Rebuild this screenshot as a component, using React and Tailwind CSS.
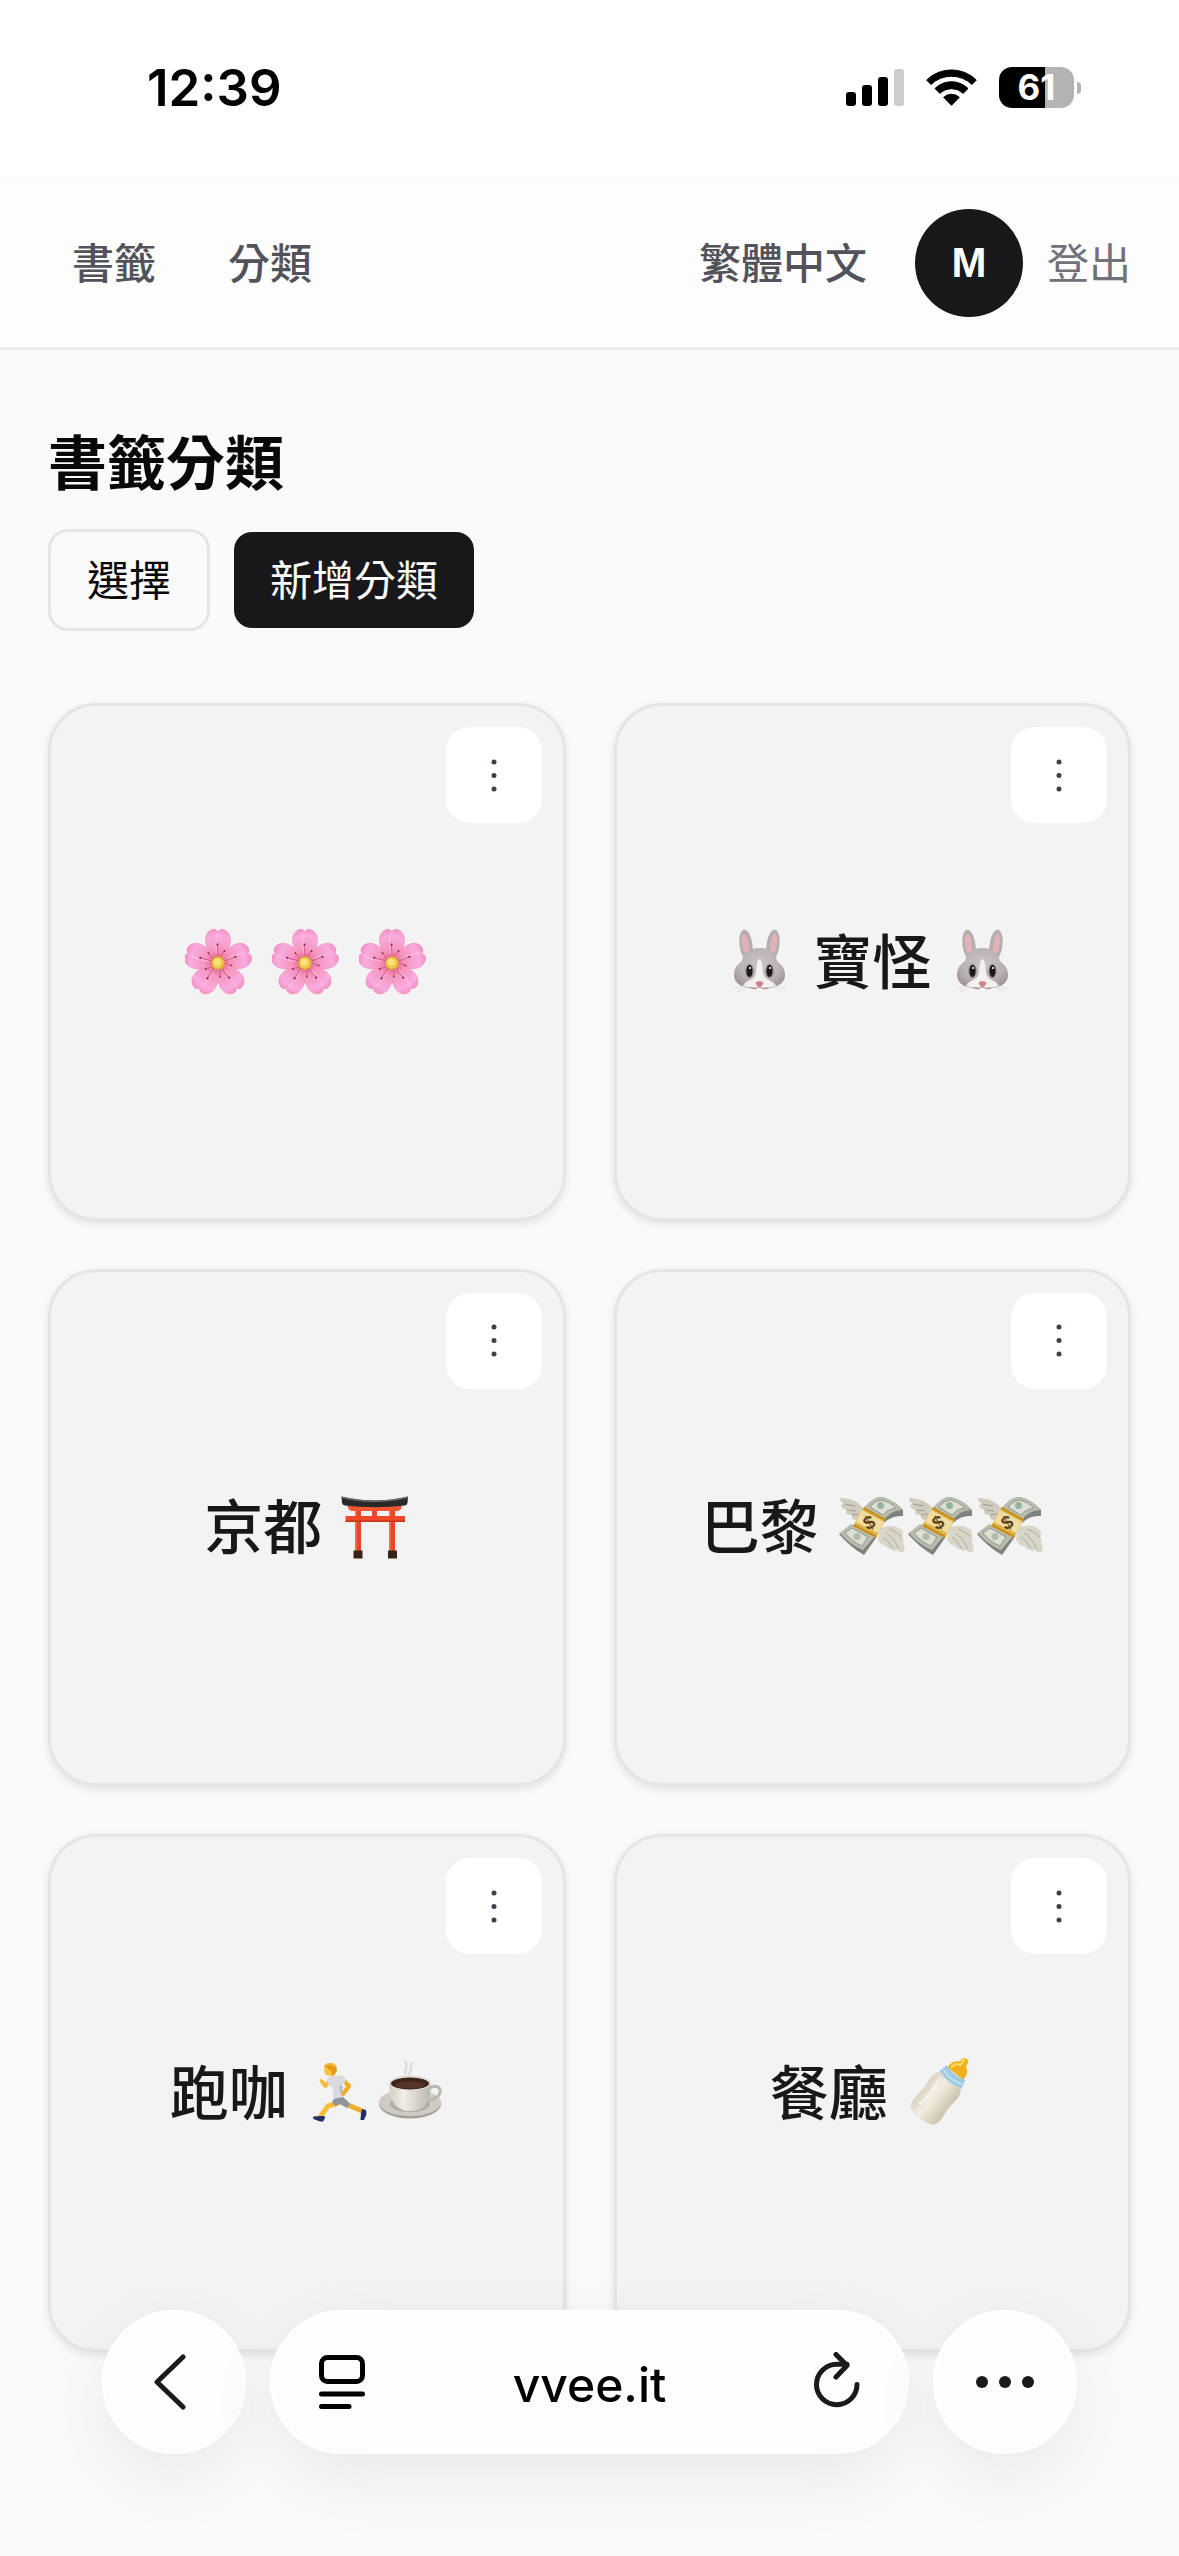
import React, { useState } from 'react';

const categories = [
  { id: 1, parts: ['blossom', 'blossom', 'blossom'] },
  { id: 2, parts: ['rabbit', '寶怪', 'rabbit'] },
  { id: 3, parts: ['京都', 'shrine'] },
  { id: 4, parts: ['巴黎', 'money*3'] },
  { id: 5, parts: ['跑咖', 'runner+coffee'] },
  { id: 6, parts: ['餐廳', 'bottle'] },
];

function Emoji({ label, children }) {
  return (
    <svg role="img" aria-label={label} viewBox="0 0 69 69" className="w-[69px] h-[69px] shrink-0">
      {children}
    </svg>
  );
}

function Blossom() {
  return (
    <Emoji label="櫻花">
      <defs>
        <radialGradient id="petal" gradientUnits="userSpaceOnUse" cx="0" cy="0" r="34">
          <stop offset="0.1" stopColor="#e8638f" />
          <stop offset="0.4" stopColor="#f696bd" />
          <stop offset="0.8" stopColor="#f9abe0" />
          <stop offset="1" stopColor="#f291c4" />
        </radialGradient>
      </defs>
      <g transform="translate(33 36)">
        {[72, 144, 216, 288, 0].map((deg) => (
          <g key={deg} transform={`rotate(${deg})`}>
            <path
              d="M0 0C-7-6-13-16-12.500-24C-12-31-6.500-34.500-2.500-33.500C-1.300-33-.500-32 0-31C.500-32 1.300-33 2.500-33.500C6.500-34.500 12-31 12.500-24C13-16 7-6 0 0Z"
              fill="url(#petal)"
              stroke="#ee86b4"
              strokeWidth="0.5"
            />
            <path d="M-1-30C-3-22-2-14-1-9" stroke="#fdc3ea" strokeWidth="1.200" fill="none" opacity="0.7" />
            <path d="M0-6L-.5-18M2-6L6.500-12" stroke="#b9406f" strokeWidth="0.6" />
            <circle cx="-.5" cy="-18.500" r="1.100" fill="#7c2a4c" />
            <circle cx="6.500" cy="-12" r="1" fill="#7c2a4c" />
          </g>
        ))}
        <circle r="7" fill="#dda23a" />
        <circle r="6" fill="#f2c94f" strokeDasharray="1 1.500" stroke="#c98b2d" />
        <circle cx="-1" cy="-1" r="3.500" fill="#fae27a" />
      </g>
    </Emoji>
  );
}

function Rabbit() {
  return (
    <Emoji label="兔子">
      <defs>
        <radialGradient id="fur" cx="0.5" cy="0.4" r="0.6">
          <stop offset="0" stopColor="#cdc6c7" />
          <stop offset="0.7" stopColor="#b8b0b1" />
          <stop offset="1" stopColor="#a0979a" />
        </radialGradient>
      </defs>
      <g transform="translate(3 0)">
        <path d="M14 30C9 20 9 6 14.500 2.500C20 2 24 12 24 27Z" fill="#b5adae" />
        <path d="M47 30C52 20 52 6 46.500 2.500C41 2 37 12 37 27Z" fill="#b5adae" />
        <path d="M15.500 26C12 18 12 9 15 6.500C19 8 20.500 17 20 25Z" fill="#dfb3b7" />
        <path d="M45.500 26C49 18 49 9 46 6.500C42 8 40.500 17 41 25Z" fill="#dfb3b7" />
        <path d="M30.500 21C20 21 14 27 13 34C9 37 5 41 5 48C5 57 14 62 30.500 62C47 62 56 57 56 48C56 41 52 37 48 34C47 27 41 21 30.500 21Z" fill="url(#fur)" />
        <path d="M30.500 32C27 33 28 44 26 49C22 54 16 54 14 59C19 61.500 42 61.500 47 59C45 54 39 54 35 49C33 44 34 33 30.500 32Z" fill="#f3f0ef" />
        <ellipse cx="20.500" cy="44" rx="4.200" ry="7.200" fill="#8e8586" />
        <ellipse cx="40.500" cy="44" rx="4.200" ry="7.200" fill="#8e8586" />
        <ellipse cx="20.500" cy="44" rx="3" ry="6" fill="#19191b" />
        <ellipse cx="40.500" cy="44" rx="3" ry="6" fill="#19191b" />
        <circle cx="21" cy="41" r="1.100" fill="#fff" />
        <circle cx="41" cy="41" r="1.100" fill="#fff" />
        <path d="M26.500 55.500Q30.500 53 34.500 55.500Q33 60 30.500 60Q28 60 26.500 55.500Z" fill="#cf8088" />
        <path d="M22 61Q27 63 30.500 60Q34 63 39 61" stroke="#b87f85" fill="none" />
        <rect x="27.500" y="61" width="6" height="3.500" rx="1.500" fill="#fff" stroke="#d8d3d2" strokeWidth="0.4" />
        <path d="M17 58L5 62M18 60L8 65M44 58L56 62M43 60L53 65" stroke="#d5d0d0" strokeWidth="0.6" />
      </g>
    </Emoji>
  );
}

function Shrine() {
  return (
    <Emoji label="鳥居">
      <path d="M15 17H21V59H15ZM49 17H55V59H49Z" fill="#ea4526" />
      <path d="M15 17H17V59H15ZM49 17H51V59H49Z" fill="#f9694a" />
      <path d="M32 16H37V24H32Z" fill="#ea4526" />
      <path d="M5.500 23H65V29H5.500Z" fill="#ee4a29" />
      <path d="M5.500 27.500H65V29H5.500Z" fill="#c93418" />
      <path d="M7 10.500Q35 15 62.500 10.500L61 16Q60 18 57 18H13Q10 18 8.500 16Z" fill="#f25532" />
      <path d="M1.500 3.500Q35 11.500 68 3.500L67.500 10Q67 12 65 12.500Q35 16 5 12.500Q2.500 12 2 10Z" fill="#292927" />
      <path d="M1.500 3.500Q35 11.500 68 3.500L67.800 5Q35 13 1.700 5Z" fill="#6c6d69" />
      <path d="M13.500 57.500H22.500V65.500H13.500ZM48 57.500H57V65.500H48Z" fill="#37231c" />
    </Emoji>
  );
}

function Money() {
  return (
    <Emoji label="長翅膀的錢">
      <path d="M26 15C22 9 13 5 3 5C3 8 5 10 7 11C5 11 4 12 4 13C6 16 8 17 10 17C9 18 9 19 9 20C11 22 13 22 15 22C14 24 15 25 16 26C19 28 23 27 25 24Z" fill="#cfccbe" />
      <path d="M7 11L18 13M10 17L19 18M15 22L22 21" stroke="#98968b" strokeWidth="0.9" />
      <path d="M2 41L12 33L39 45L27 62Q13 54 2 41Z" fill="#7f837d" />
      <path d="M3 40L14 31L38 43L26 57Q13 52 3 40Z" fill="#b9bdb0" />
      <path d="M8 40L15 35L31 44L25 53Q15 49 8 40Z" fill="#dcdfd2" stroke="#8b9285" strokeWidth="0.9" />
      <circle cx="20" cy="43.500" r="3.500" fill="#aebda9" />
      <path d="M27 15Q37 3 45 4Q57 7 66 17V23Q55 22 47 30L28 21Z" fill="#7f837d" />
      <path d="M27 15Q37 3 45 4Q57 7 65 17Q54 17 47 27Z" fill="#b9bdb0" />
      <path d="M33 14Q39 7 45 7Q53 9 59 15Q51 16 46 22Z" fill="#dcdfd2" stroke="#8b9285" strokeWidth="0.9" />
      <circle cx="43.500" cy="12.500" r="3.500" fill="#92b4a1" />
      <path d="M27 14L49 26L39 45L16 33Z" fill="#ddb34c" />
      <path d="M25 17L47 29L41 40L19 29Z" fill="#f1dda0" />
      <path d="M27 14L49 26L48 28L26 16ZM17.500 31L40 43L39 45L16 33Z" fill="#c88f1c" />
      <text x="32" y="36" textAnchor="middle" fontSize="19" fontWeight="700" fontFamily="Liberation Sans, sans-serif" fill="#5c431b" transform="rotate(-28 32 29)">$</text>
      <path d="M43 36C49 31 59 32 65 37C67 41 66 43 65 44C67 47 67 49 66 50C68 54 68 57 67 59C63 60 61 58 60 57C58 59 56 58 55 56C52 57 50 55 49 53C45 53 42 49 41 46Z" fill="#d8d5c9" />
      <path d="M52 36Q59 38 65 44M49 40Q57 45 62 56M46 44Q52 48 56 56" stroke="#a7a498" strokeWidth="0.9" fill="none" />
    </Emoji>
  );
}

function Runner() {
  return (
    <Emoji label="跑步">
      <path d="M35 20L43 28L37 36" stroke="#f0ae2c" strokeWidth="4.500" strokeLinecap="round" strokeLinejoin="round" fill="none" />
      <path d="M24 22L19.500 28L15.500 23" stroke="#f9bd3b" strokeWidth="4" strokeLinecap="round" strokeLinejoin="round" fill="none" />
      <path d="M40 46L56 53" stroke="#f0ae2c" strokeWidth="5" strokeLinecap="round" />
      <path d="M32 45L22 48L14 59" stroke="#f9bd3b" strokeWidth="5" strokeLinecap="round" strokeLinejoin="round" fill="none" />
      <path d="M21 21Q25 17 31 17.500Q37 17 40 22L38 26L35 27Q34 34 36 41L27 42Q28 34 26 29Q21 27 21 21Z" fill="#d8dade" />
      <path d="M33 27L37 28L35.500 38Q33 33 33 27Z" fill="#b9bdc4" />
      <path d="M28 41L37 39Q42 43 44 46L41 50L34 46L29 48L26 44Z" fill="#8f959d" />
      <path d="M7 58.500L17 58Q19.500 58 19 60L17 63.500H14L7.500 61Z" fill="#1f2c68" />
      <path d="M56 51L60 52L60.500 56L58 62H54.500L55 55Z" fill="#1f2c68" />
      <circle cx="24" cy="12" r="6" fill="#fbc23f" />
      <path d="M18 8Q20 4.500 25 5Q31 6 31 12Q30 17 26 18L25 13L21 10Z" fill="#e99c1a" />
      <path d="M20 7Q25 4 29 9" stroke="#ffd95e" fill="none" />
    </Emoji>
  );
}

function Coffee() {
  return (
    <Emoji label="咖啡">
      <defs>
        <linearGradient id="cup">
          <stop offset="0" stopColor="#d0cec6" />
          <stop offset="0.35" stopColor="#f0eee8" />
          <stop offset="1" stopColor="#b9b6ad" />
        </linearGradient>
      </defs>
      <ellipse cx="35" cy="46" rx="31" ry="14.500" fill="#a3a19a" />
      <ellipse cx="35" cy="44.500" rx="31" ry="13.500" fill="#cdcbc4" />
      <ellipse cx="35" cy="46" rx="20" ry="8" fill="#b0ada5" />
      <path d="M54 31Q58 27 63 29Q67 32 64 37Q60 42 51 42" stroke="#bbb8af" strokeWidth="3" fill="none" />
      <path d="M14 25Q14 41 21 48Q27 53 35 53Q44 53 50 48Q56 41 56 25Z" fill="url(#cup)" />
      <ellipse cx="35" cy="25" rx="21" ry="7.500" fill="#dddbd4" />
      <ellipse cx="35" cy="25.500" rx="19" ry="6" fill="#3b241b" />
      <ellipse cx="35" cy="27" rx="15" ry="3.500" fill="#553626" />
      <path d="M31 16C27 11 35 10 30 4M34 16C39 11 32 9 38 5" stroke="#d9dadb" strokeWidth="2" strokeLinecap="round" fill="none" />
    </Emoji>
  );
}

function Bottle() {
  return (
    <Emoji label="奶瓶">
      <defs>
        <linearGradient id="milk">
          <stop offset="0" stopColor="#d8d3c2" />
          <stop offset="0.4" stopColor="#f2eee1" />
          <stop offset="1" stopColor="#c9c2ad" />
        </linearGradient>
      </defs>
      <g transform="translate(29 41.500) rotate(38)">
        <path d="M-3.500-50Q0-53 3.500-50L4-45Q11-42 10-33H-10Q-11-42-4-45Z" fill="#efb01c" />
        <path d="M-2-50L-1-43Q-7-41-7-35" stroke="#ffdc66" strokeWidth="2" fill="none" />
        <path d="M-12-34Q0-30 12-34L14-25Q0-19-14-25Z" fill="#9fcbe2" />
        <path d="M-12-29Q0-24 12-29" stroke="#c3e3f2" strokeWidth="1.500" fill="none" />
        <path d="M-13-25Q0-20 13-25Q18-20 17-12Q15-2 17 10Q18 18 13 22Q0 27-13 22Q-18 18-17 10Q-15-2-17-12Q-18-20-13-25Z" fill="url(#milk)" />
        <path d="M-9-18Q-6-4-9 12" stroke="#fff" strokeWidth="3" strokeLinecap="round" opacity="0.5" fill="none" />
      </g>
    </Emoji>
  );
}

const emojis = {
  blossom: <Blossom />,
  rabbit: <Rabbit />,
  shrine: <Shrine />,
  'money*3': <><Money /><Money /><Money /></>,
  'runner+coffee': <><Runner /><Coffee /></>,
  bottle: <Bottle />,
};

function StatusBar() {
  return (
    <div className="h-[178px] flex justify-between items-start pt-[67px] pl-[147px] pr-[98px] bg-white text-black">
      <span className="font-[Inter,sans-serif] text-[51px] leading-[42px] font-semibold">12:39</span>
      <div className="flex items-center gap-[22px]">
        <svg width="58" height="37" viewBox="0 0 58 37" aria-label="訊號">
          <rect x="0" y="23" width="10" height="14" rx="3" />
          <rect x="16" y="16" width="10" height="21" rx="3" />
          <rect x="32" y="8" width="10" height="29" rx="3" />
          <rect x="48" y="0" width="10" height="37" rx="3" fill="#cccccc" />
        </svg>
        <svg width="51" height="37" viewBox="0 0 51 37" aria-label="Wi-Fi" stroke="#000" strokeLinejoin="round">
          <path d="M.7 11A35.500 35.500 0 0 1 50.300 11L46 15.500A29.500 29.500 0 0 0 5 15.500Z" />
          <path d="M9 19.500A23.500 23.500 0 0 1 42 19.500L37.200 24.300A17 17 0 0 0 13.800 24.300Z" />
          <path d="M17.700 28.300A11.500 11.500 0 0 1 33.300 28.300L25.500 36.300Z" />
        </svg>
        <div className="flex items-center gap-[3px]">
          <div className="w-[75px] h-[41px] rounded-[13px] bg-linear-to-r from-black from-61% to-[#b3b3b3] to-61% flex items-center justify-center font-[Inter,sans-serif] text-[35px] leading-[41px] font-bold text-white">
            61
          </div>
          <div className="w-1 h-3 rounded-r-full bg-[#b3b3b3]" />
        </div>
      </div>
    </div>
  );
}

function Header() {
  return (
    <header className="h-[172px] flex items-center justify-between px-12 bg-[#fdfdfd] border-t border-t-[#f8f8f8] border-b-3 border-b-[#ebecee] text-[42px] leading-[60px]">
      <nav className="flex items-center gap-6 pb-1 font-medium text-[#52525b]">
        <a href="#bookmarks" className="px-6">書籤</a>
        <a href="#categories" className="px-6">分類</a>
      </nav>
      <div className="flex items-center gap-6">
        <button type="button" className="px-6 pb-1 font-medium text-[#52525b]">繁體中文</button>
        <div className="size-[108px] rounded-full bg-[#18181b] flex items-center justify-center font-['Liberation_Sans',sans-serif] text-[42px] font-bold text-white">
          M
        </div>
        <button type="button" className="pb-1 text-[#71717a]">登出</button>
      </div>
    </header>
  );
}

function CategoryCard({ parts }) {
  return (
    <li className="relative aspect-square rounded-[48px] border-3 border-[#e4e5e7] bg-[#f3f3f3] shadow-[0_3px_8px_rgba(0,0,0,0.10)] flex items-center justify-center">
      <h2 className="flex items-center gap-[18px] text-[59px] leading-[72px] font-medium text-[#18181b] whitespace-nowrap">
        {parts.map((part, i) =>
          emojis[part] ? (
            <span key={i} className="flex items-center">{emojis[part]}</span>
          ) : (
            <span key={i} className="pb-1.5">{part}</span>
          )
        )}
      </h2>
      <button type="button" aria-label="更多" className="absolute top-[21px] right-[21px] size-24 rounded-3xl bg-white flex items-center justify-center">
        <svg width="6" height="33" viewBox="0 0 6 33" fill="#3f3f46">
          <circle cx="3" cy="3" r="2.500" />
          <circle cx="3" cy="16.500" r="2.500" />
          <circle cx="3" cy="30" r="2.500" />
        </svg>
      </button>
    </li>
  );
}

function BrowserBar() {
  const glass = 'h-36 rounded-full bg-[#fdfdfd] border-2 border-white shadow-[0_24px_72px_rgba(0,0,0,0.07)] flex items-center';

  return (
    <div className="fixed inset-x-0 bottom-[102px] px-[102px] flex gap-6 text-[#1a1a1a]">
      <button type="button" aria-label="返回" className={`${glass} w-36 shrink-0 justify-center`}>
        <svg width="40" height="56" viewBox="0 0 40 56" fill="none" stroke="currentColor" strokeWidth="5" strokeLinecap="round" strokeLinejoin="round">
          <path d="M29 3L3 28L29 53" />
        </svg>
      </button>
      <div className={`${glass} flex-1 justify-between px-[47px] text-black`}>
        <button type="button" aria-label="頁面選單">
          <svg width="46" height="54" viewBox="0 0 46 54" fill="none" stroke="currentColor" strokeWidth="5" strokeLinecap="round">
            <rect x="2.500" y="2.500" width="41" height="24" rx="6" />
            <path d="M2.500 39H43.500M2.500 51.500H30" />
          </svg>
        </button>
        <span className="pt-1.5 font-[Inter,sans-serif] text-[48px] leading-[60px] font-medium">vvee.it</span>
        <button type="button" aria-label="重新載入" className="text-[#1a1a1a]">
          <svg width="46" height="60" viewBox="0 0 46 60" fill="none" stroke="currentColor" strokeWidth="5" strokeLinecap="round" strokeLinejoin="round">
            <path d="M43 32.500A20.250 20.250 0 1 1 22.750 12.250H33" />
            <path d="M22 2.500L33 13.500L22 25" />
          </svg>
        </button>
      </div>
      <button type="button" aria-label="更多選項" className={`${glass} w-36 shrink-0 justify-center`}>
        <svg width="60" height="14" viewBox="0 0 60 14" fill="currentColor">
          <circle cx="7" cy="7" r="6" />
          <circle cx="30" cy="7" r="6" />
          <circle cx="53" cy="7" r="6" />
        </svg>
      </button>
    </div>
  );
}

export default function App() {
  const [selecting, setSelecting] = useState(false);

  return (
    <div className="min-h-screen bg-[#fafafa] font-['Noto_Sans_CJK_TC',sans-serif]" lang="zh-Hant">
      <StatusBar />
      <Header />
      <main className="px-12 pt-[69px]">
        <h1 className="text-[59px] leading-[82px] font-bold text-[#09090b]">書籤分類</h1>
        <div className="mt-7 flex items-center gap-6 text-[42px] leading-[60px]">
          <button
            type="button"
            aria-pressed={selecting}
            onClick={() => setSelecting(!selecting)}
            className="px-9 pt-4 pb-5 rounded-[20px] border-3 border-[#e4e5e7] text-[#09090b]"
          >
            選擇
          </button>
          <button type="button" className="px-9 pt-4 pb-5 rounded-[18px] bg-[#18181b] text-[#fafafa]">新增分類</button>
        </div>
        <ul className="mt-[72px] grid grid-cols-2 gap-12">
          {categories.map((category) => (
            <CategoryCard key={category.id} parts={category.parts} />
          ))}
        </ul>
      </main>
      <BrowserBar />
    </div>
  );
}
